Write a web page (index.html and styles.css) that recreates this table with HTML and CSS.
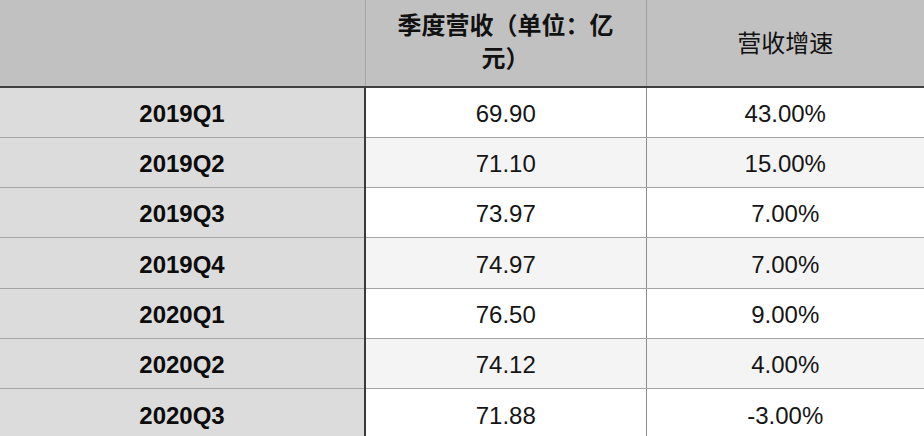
FILE: index.html
```html
<!DOCTYPE html>
<html lang="zh-CN">
<head>
<meta charset="utf-8">
<title>季度营收</title>
<link rel="stylesheet" href="styles.css">
</head>
<body>
<table class="rev-table">
  <colgroup>
    <col class="col-q">
    <col class="col-rev">
    <col class="col-growth">
  </colgroup>
  <thead>
    <tr class="head-row">
      <th class="h-q"></th>
      <th class="h-rev">季度营收（单位：亿元）</th>
      <th class="h-growth">营收增速</th>
    </tr>
  </thead>
  <tbody>
    <tr class="row"><th class="q">2019Q1</th><td>69.90</td><td>43.00%</td></tr>
    <tr class="row alt"><th class="q">2019Q2</th><td>71.10</td><td>15.00%</td></tr>
    <tr class="row"><th class="q">2019Q3</th><td>73.97</td><td>7.00%</td></tr>
    <tr class="row alt"><th class="q">2019Q4</th><td>74.97</td><td>7.00%</td></tr>
    <tr class="row"><th class="q">2020Q1</th><td>76.50</td><td>9.00%</td></tr>
    <tr class="row alt"><th class="q">2020Q2</th><td>74.12</td><td>4.00%</td></tr>
    <tr class="row"><th class="q">2020Q3</th><td>71.88</td><td>-3.00%</td></tr>
  </tbody>
</table>
</body>
</html>
```

FILE: styles.css
```css
html, body {
  margin: 0;
  padding: 0;
  background: #ffffff;
}

body {
  font-family: "Liberation Sans", "Noto Sans CJK SC", sans-serif;
  color: #111111;
  overflow: hidden;
}

.rev-table {
  width: 924px;
  border-collapse: collapse;
  table-layout: fixed;
}

.col-q { width: 365px; }
.col-rev { width: 281px; }
.col-growth { width: 278px; }

.head-row th {
  height: 87px;
  box-sizing: border-box;
  background: #c1c1c1;
  border-bottom: 2px solid #3f3f3f;
  padding: 0;
  text-align: center;
  vertical-align: middle;
  font-family: "Liberation Sans", "Noto Sans CJK SC", sans-serif;
  font-size: 24px;
  line-height: 33px;
  color: #111111;
}

.head-row .h-q {
  border-right: 1px solid #a6a6a6;
}

.head-row .h-rev {
  font-weight: 700;
  padding: 0 22px 2px;
  border-right: 1px solid #a0a0a0;
}

.head-row .h-growth {
  font-weight: 400;
}

.row th,
.row td {
  height: 50.33px;
  box-sizing: border-box;
  text-align: center;
  vertical-align: middle;
  font-size: 24px;
  line-height: 28px;
  border-bottom: 1px solid #a4a4a4;
  padding: 3px 0 0;
}

.row td {
  background: #ffffff;
  font-weight: 400;
  color: #151515;
}

.row.alt td {
  background: #f4f4f4;
}

.row .q {
  background: #dcdcdc;
  font-weight: 700;
  color: #0c0c0c;
  border-right: 2px solid #3a3a3a;
}

.row td + td {
  border-left: 1px solid #8c8c8c;
}
```
